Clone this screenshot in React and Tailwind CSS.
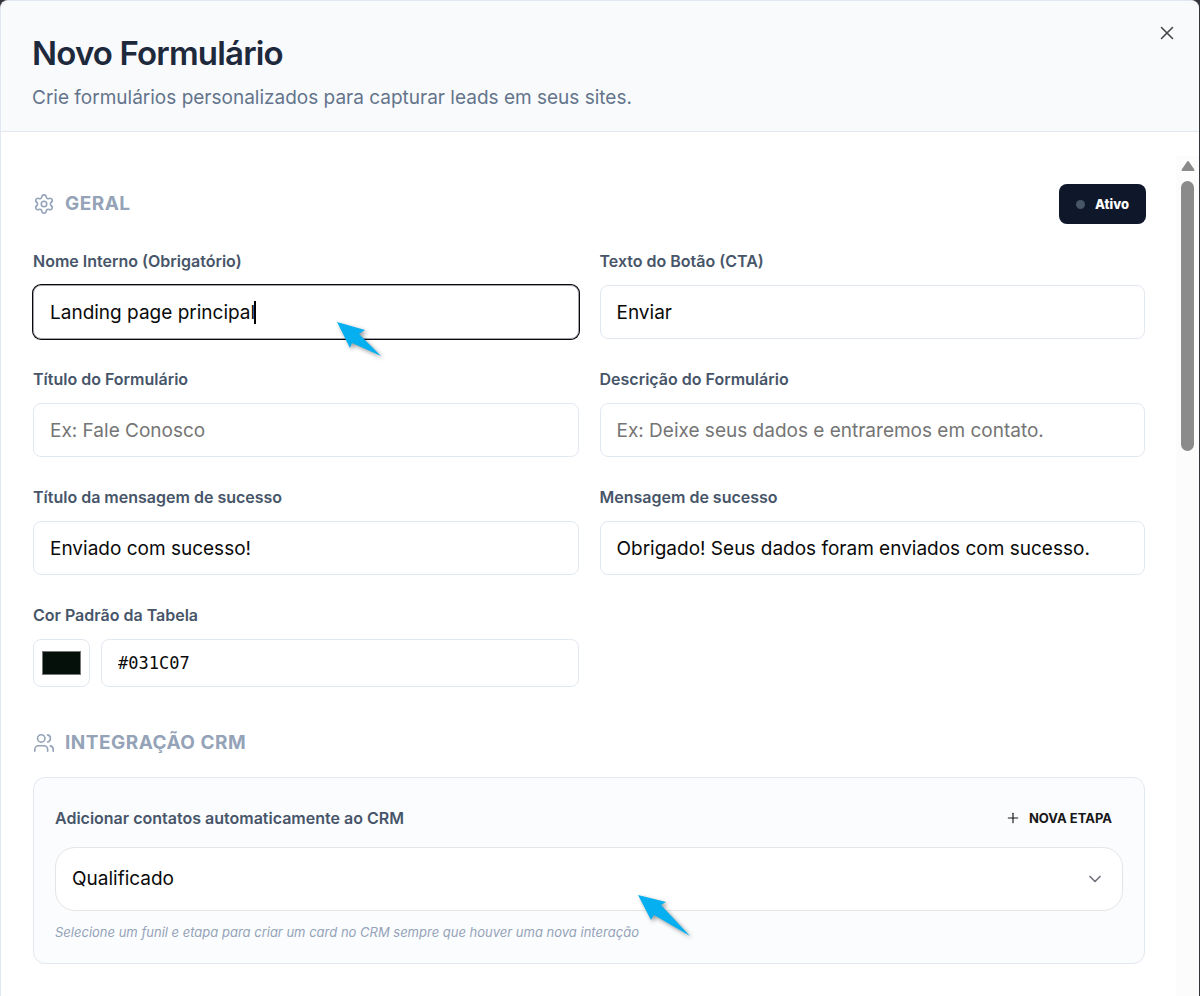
import { useState } from "react";
import { ChevronDown, Plus, Settings, Users, X } from "lucide-react";

const inputBase =
  "h-[54px] w-full rounded-lg border bg-white px-4 text-[19px] leading-7 text-[#0a0a0a] placeholder:text-[#757575] focus:outline-none";
const inputClass = `${inputBase} border-[#e2e8f0]`;
const activeInputClass = `${inputBase} border-[#a1a1aa] ring-1 ring-[#0a0a0a]`;

function Label({ htmlFor, children }) {
  return (
    <label htmlFor={htmlFor} className="text-base leading-6 font-semibold text-[#475569]">
      {children}
    </label>
  );
}

function Field({ id, label, value, placeholder }) {
  return (
    <div className="flex flex-col gap-3">
      <Label htmlFor={id}>{label}</Label>
      <input id={id} type="text" defaultValue={value} placeholder={placeholder} className={inputClass} />
    </div>
  );
}

function SectionTitle({ icon: Icon, children }) {
  return (
    <h2 className="flex items-center gap-2.5 text-[19px] leading-7 font-bold tracking-wide text-[#94a3b8] uppercase">
      <Icon size={22} strokeWidth={1.75} aria-hidden="true" />
      {children}
    </h2>
  );
}

function Pointer({ points, className }) {
  return (
    <svg
      viewBox="0 0 56 46"
      aria-hidden="true"
      className={`pointer-events-none absolute h-[46px] w-14 overflow-visible drop-shadow-[2px_2px_2px_rgba(0,0,0,0.4)] ${className}`}
    >
      <polygon points={points} fill="#06b0f0" />
    </svg>
  );
}

export default function App() {
  const [color, setColor] = useState("#06100a");

  return (
    <div className="flex min-h-screen bg-[#35343a] pr-px font-['Inter',sans-serif]">
      <main className="flex min-w-0 flex-1 flex-col overflow-hidden rounded-t-lg border-t border-l border-[#e2e8f0] bg-white">
        <header className="flex items-start justify-between border-b border-[#e2e8f0] bg-[#f8fafc] pt-8 pr-[21px] pb-[21px] pl-[31px]">
          <div className="flex flex-col gap-[13px]">
            <h1 className="text-[33px] leading-10 font-semibold tracking-tight text-[#1e293b]">Novo Formulário</h1>
            <p className="text-[19px] leading-6 text-[#64748b]">
              Crie formulários personalizados para capturar leads em seus sites.
            </p>
          </div>
          <button type="button" aria-label="Fechar" className="-mt-[11px] p-0 text-[#48494c]">
            <X size={22} strokeWidth={1.75} />
          </button>
        </header>

        <div className="flex flex-1 pt-6">
          <form className="min-w-0 flex-1 pt-7 pr-[31px] pb-8 pl-8" onSubmit={(e) => e.preventDefault()}>
            <section>
              <div className="flex items-center justify-between">
                <SectionTitle icon={Settings}>Geral</SectionTitle>
                <button
                  type="button"
                  className="-mr-px flex h-10 items-center gap-2.5 rounded-lg bg-[#0f172a] px-[17px] text-[13px] leading-5 font-extrabold text-white"
                >
                  <span className="size-[9px] rounded-full bg-[#475569]" />
                  Ativo
                </button>
              </div>

              <div className="mt-[25px] grid grid-cols-2 gap-x-[21px] gap-y-7">
                <div className="flex flex-col gap-3">
                  <Label htmlFor="nome">Nome Interno (Obrigatório)</Label>
                  <div className="relative">
                    <input id="nome" type="text" defaultValue="Landing page principal" className={activeInputClass} />
                    <span className="absolute top-4 left-[221px] h-[23px] w-0.5 bg-black" />
                    <Pointer className="top-9 left-[303px]" points="1,1 29,9 23,13 45,35 16,22 14,27" />
                  </div>
                </div>
                <Field id="cta" label="Texto do Botão (CTA)" value="Enviar" />
                <Field id="titulo" label="Título do Formulário" placeholder="Ex: Fale Conosco" />
                <Field
                  id="descricao"
                  label="Descrição do Formulário"
                  placeholder="Ex: Deixe seus dados e entraremos em contato."
                />
                <Field id="titulo-sucesso" label="Título da mensagem de sucesso" value="Enviado com sucesso!" />
                <Field
                  id="mensagem-sucesso"
                  label="Mensagem de sucesso"
                  value="Obrigado! Seus dados foram enviados com sucesso."
                />
                <div className="flex flex-col gap-3">
                  <Label htmlFor="cor">Cor Padrão da Tabela</Label>
                  <div className="flex gap-[11px]">
                    <input
                      type="color"
                      aria-label="Selecionar cor"
                      value={color}
                      onChange={(e) => setColor(e.target.value)}
                      className="h-12 w-[57px] rounded-lg border border-[#e2e8f0] bg-white px-1.5 py-[7px]"
                    />
                    <input
                      id="cor"
                      type="text"
                      defaultValue="#031C07"
                      className="h-12 min-w-0 flex-1 rounded-lg border border-[#e2e8f0] bg-white px-4 font-['DejaVu_Sans_Mono',monospace] text-[17px] leading-6 text-[#0a0a0a] focus:outline-none"
                    />
                  </div>
                </div>
              </div>
            </section>

            <section className="mt-[42px]">
              <SectionTitle icon={Users}>Integração CRM</SectionTitle>
              <div className="mt-5 rounded-xl border border-[#e2e8f0] bg-[#fbfcfe] px-[21px] pt-6 pb-[19px]">
                <div className="flex items-center justify-between">
                  <Label htmlFor="etapa">Adicionar contatos automaticamente ao CRM</Label>
                  <button
                    type="button"
                    className="flex h-8 items-center gap-2 px-[11px] text-[13px] leading-5 font-bold text-[#171717] uppercase"
                  >
                    <Plus size={16} strokeWidth={1.75} />
                    Nova Etapa
                  </button>
                </div>
                <div className="relative mt-[13px]">
                  <select
                    id="etapa"
                    className="h-16 w-full appearance-none rounded-[20px] border border-[#e5e5e5] bg-white px-4 text-[19px] leading-7 text-[#0a0a0a] focus:outline-none"
                  >
                    <option>Qualificado</option>
                  </select>
                  <ChevronDown
                    size={20}
                    strokeWidth={2}
                    className="pointer-events-none absolute top-[22px] right-[18px] text-[#71717a]"
                  />
                  <Pointer className="top-[47px] left-[582px]" points="1,1 29,8 24,11 53,42 17,21 14,26" />
                </div>
                <p className="mt-[9px] text-[13px] leading-6 text-[#94a3b8] italic">
                  Selecione um funil e etapa para criar um card no CRM sempre que houver uma nova interação
                </p>
              </div>
            </section>
          </form>

          <div aria-hidden="true" className="flex w-[23px] flex-col items-center gap-[9px] bg-[#fcfcfc] pt-1">
            <svg viewBox="0 0 16 12" className="h-3 w-4">
              <path
                d="M8 2 L13.5 10 H2.5 Z"
                fill="#8b8b8b"
                stroke="#8b8b8b"
                strokeWidth="2"
                strokeLinejoin="round"
              />
            </svg>
            <div className="h-[270px] w-[13px] rounded-full bg-[#8b8b8b]" />
          </div>
        </div>
      </main>
    </div>
  );
}
